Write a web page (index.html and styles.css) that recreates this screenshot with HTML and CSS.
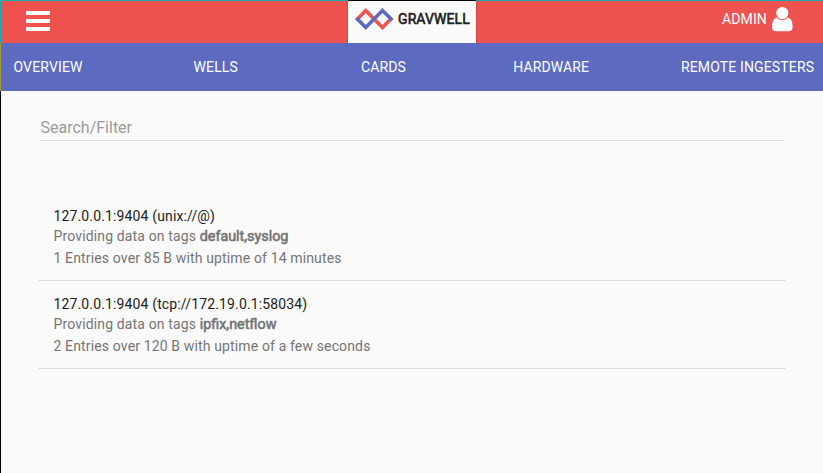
FILE: index.html
```html
<!DOCTYPE html>
<html lang="en">
<head>
<meta charset="utf-8">
<title>Gravwell</title>
<link rel="stylesheet" href="styles.css">
</head>
<body>
<div class="app">
  <header class="toolbar">
    <button class="menu" aria-label="Menu"><span></span><span></span><span></span></button>
    <div class="brand">
      <svg class="mark" width="40" height="24" viewBox="0 0 40 24" fill="none" stroke-width="3.6">
        <path stroke="#ef5350" d="M2.3 13.2 L11.7 3.5 L28.5 20.5 L38 10.8"/>
        <path stroke="#5c6bc0" d="M2.5 10.9 L11.7 20.5 L28.5 3.5 L38.4 13.3"/>
      </svg>
      <span class="name">GRAVWELL</span>
    </div>
    <div class="user">
      <span>ADMIN</span>
      <svg width="21" height="25" viewBox="0 0 21 25" fill="#fff">
        <circle cx="10.3" cy="6.1" r="6.1"/>
        <path d="M4.8 10.5 C1.4 11.3 0 15 0 20 C0 23 1.7 24.3 4.4 24.3 H16.2 C19 24.3 20.6 23 20.6 20 C20.6 15 19.2 11.3 15.8 10.5 C12.8 14.1 7.8 14.1 4.8 10.5 Z"/>
      </svg>
    </div>
  </header>
  <nav class="tabs">
    <a>OVERVIEW</a>
    <a>WELLS</a>
    <a>CARDS</a>
    <a>HARDWARE</a>
    <a>REMOTE INGESTERS</a>
  </nav>
  <main>
    <input class="search" type="text" placeholder="Search/Filter">
    <ul class="ingesters">
      <li>
        <h3>127.0.0.1:9404 (unix://@)</h3>
        <p>Providing data on tags <b>default,syslog</b></p>
        <p>1 Entries over 85 B with uptime of 14 minutes</p>
      </li>
      <li>
        <h3>127.0.0.1:9404 (tcp://172.19.0.1:58034)</h3>
        <p>Providing data on tags <b>ipfix,netflow</b></p>
        <p>2 Entries over 120 B with uptime of a few seconds</p>
      </li>
    </ul>
  </main>
</div>
</body>
</html>
```
FILE: styles.css
```css
* { box-sizing: border-box; }
body {
  margin: 0;
  background: #fafafa;
  font-family: Roboto, "Liberation Sans", sans-serif;
  font-size: 14px;
  letter-spacing: 0.14px;
  overflow: hidden;
}
.app { min-height: 473px; border-left: 1px solid #000; }
.toolbar {
  height: 43px;
  margin-left: -1px;
  border-top: 1px solid #12a9af;
  border-left: 1px solid #12a9af;
  background: #ef5350;
  color: #fff;
  display: grid;
  grid-template-columns: 347px 128px 1fr;
}
.menu {
  width: 24px;
  height: 20px;
  margin: 10px 0 0 25px;
  padding: 0;
  border: 0;
  background: none;
  display: flex;
  flex-direction: column;
  justify-content: space-between;
}
.menu span { height: 4px; width: 24px; border-radius: 0.5px; background: #fff; }
.brand {
  margin-top: -1px;
  border-top: 1px solid #000;
  background: #fafafa;
  color: #212121;
  display: flex;
  padding: 6px 0 0 6px;
  box-shadow: 0 0 3px rgba(0, 0, 0, 0.25);
  clip-path: inset(0 -3px);
}
.name {
  margin-left: 4px;
  line-height: 24px;
  letter-spacing: 0.1px;
  -webkit-text-stroke: 0.6px #212121;
}
.user {
  display: flex;
  justify-content: flex-end;
  padding: 6px 30px 0 0;
  line-height: 24px;
}
.user svg { margin-left: 5px; }
.tabs {
  height: 48px;
  margin-left: -1px;
  border-left: 1px solid #a39a40;
  background: #5c6bc0;
  color: #fff;
  display: grid;
  grid-template-columns: 180px 167.5px 152.2px 167.8px auto;
  padding-left: 12.5px;
  line-height: 48px;
  white-space: nowrap;
}
main { padding: 25px 37px 0; }
.search {
  display: block;
  width: 744px;
  height: 25px;
  margin-left: 2px;
  padding: 0 0 2px 0.5px;
  border: 0;
  border-bottom: 1px solid #dcdcdc;
  background: none;
  font: 16px/22px Roboto, sans-serif;
  letter-spacing: 0;
  outline: none;
}
.search::placeholder { color: #9b9b9b; opacity: 1; }
.ingesters { list-style: none; margin: 52px 0 0; padding: 0; width: 748px; }
li { height: 88px; padding: 14px 15px 0 15.5px; border-bottom: 1px solid #dcdcdc; }
h3, p { margin: 0; font-size: 14px; font-weight: 400; line-height: 18px; }
h3 { color: #212121; }
p { height: 22px; color: #757575; line-height: 22px; }
b { font-size: 14.35px; font-weight: 400; line-height: 1; letter-spacing: 0; -webkit-text-stroke: 0.6px #757575; }
```
